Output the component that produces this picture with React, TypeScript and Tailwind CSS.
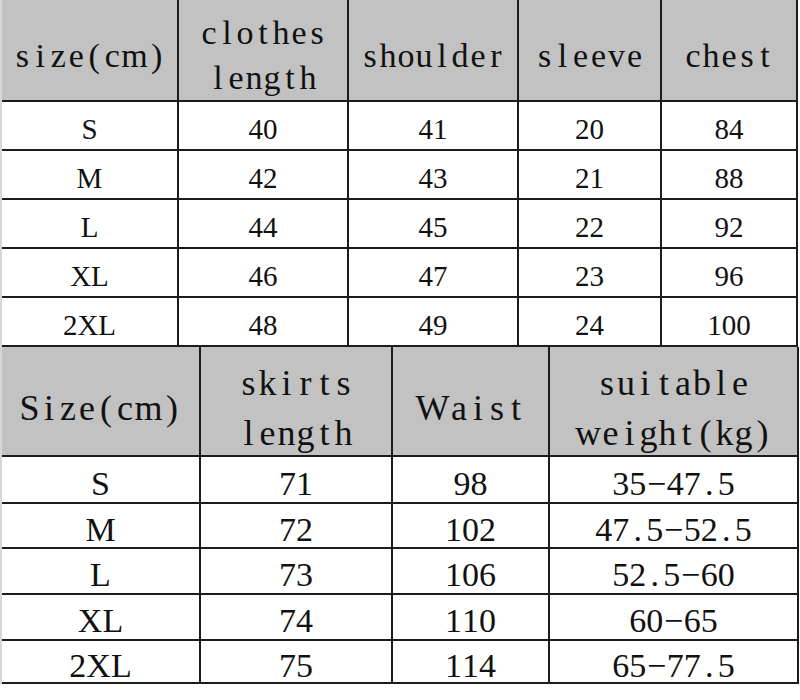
import React from 'react';

const serif = { fontFamily: '"Liberation Serif", "DejaVu Serif", serif' };

const topHead = ['size(cm)', 'clothes\nlength', 'shoulder', 'sleeve', 'chest'];
const topRows = [
  ['S', '40', '41', '20', '84'],
  ['M', '42', '43', '21', '88'],
  ['L', '44', '45', '22', '92'],
  ['XL', '46', '47', '23', '96'],
  ['2XL', '48', '49', '24', '100'],
];

const bottomHead = ['Size(cm)', 'skirts\nlength', 'Waist', 'suitable\nweight(kg)'];
const bottomRows = [
  ['S', '71', '98', '35-47.5'],
  ['M', '72', '102', '47.5-52.5'],
  ['L', '73', '106', '52.5-60'],
  ['XL', '74', '110', '60-65'],
  ['2XL', '75', '114', '65-77.5'],
];

// half-width cells for the punctuation, as the source font sets them
function Value({ text }: { text: string }) {
  return (
    <>
      {text.split('').map((ch, i) =>
        ch === '.' ? (
          <span key={i} className="inline-block w-[0.5em] text-center">.</span>
        ) : ch === '-' ? (
          <span key={i} className="inline-block w-[0.6em] text-center">{'\u2212'}</span>
        ) : (
          <span key={i}>{ch}</span>
        )
      )}
    </>
  );
}

// fixed-pitch serif letters for the header labels; wide letters keep their width
function Spaced({ text, big }: { text: string; big?: boolean }) {
  return (
    <div className="whitespace-pre flex">
      {text.split('').map((ch, i) => (
        <span
          key={i}
          className={`inline-block text-center ${big ? 'min-w-[19px]' : 'min-w-[18px]'}`}
        >
          {ch}
        </span>
      ))}
    </div>
  );
}

function HeadCell({ text, big }: { text: string; big?: boolean }) {
  const lines = text.split('\n');
  return (
    <div
      className={`bg-[#c2c2c2] flex flex-col items-center justify-center text-[#111] ${
        big ? 'text-[36px] leading-[50px] pt-[14px]' : 'text-[34px] leading-[45px] pt-[10px]'
      }`}
      style={serif}
    >
      {lines.map((l) => (
        <Spaced key={l} text={l} big={big} />
      ))}
    </div>
  );
}

function DataCell({ text, big }: { text: string; big?: boolean }) {
  return (
    <div
      className={`bg-white flex items-center justify-center text-[#111] leading-none ${
        big ? 'text-[34px] pt-[8px]' : 'text-[29px] pt-[8px]'
      }`}
      style={serif}
    >
      <Value text={text} />
    </div>
  );
}

export default function App() {
  return (
    <div className="w-[800px] h-[700px] bg-white overflow-hidden">
      <div className="w-[798px] bg-[#1c1c1c] border-l-2 border-[#d6d6d6] grid grid-cols-[175px_168px_168px_141px_134px] grid-rows-[100px_47px_47px_47px_47px_47px] gap-[2px] pr-[2px] pb-[2px]">
        {topHead.map((h) => (
          <HeadCell key={h} text={h} />
        ))}
        {topRows.map((row, r) =>
          row.map((v, c) => <DataCell key={`${r}-${c}`} text={v} />)
        )}
      </div>
      <div className="w-[799px] bg-[#1c1c1c] border-l-2 border-[#d6d6d6] grid grid-cols-[197px_190px_155px_247px] grid-rows-[108px_45px_43px_44px_44px_41px] gap-[2px] pr-[2px] pb-[2px]">
        {bottomHead.map((h) => (
          <HeadCell key={h} text={h} big />
        ))}
        {bottomRows.map((row, r) =>
          row.map((v, c) => <DataCell key={`${r}-${c}`} text={v} big />)
        )}
      </div>
    </div>
  );
}
